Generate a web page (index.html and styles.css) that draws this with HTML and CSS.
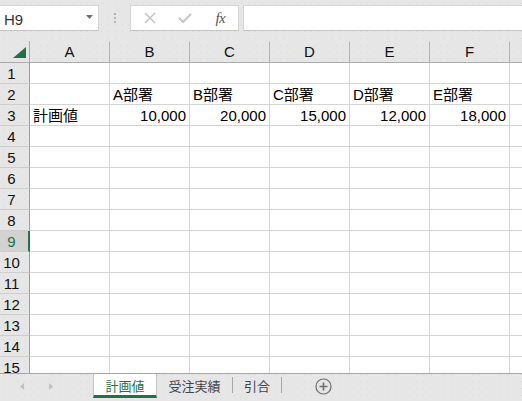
FILE: index.html
```html
<!DOCTYPE html>
<html lang="ja">
<head>
<meta charset="utf-8">
<title>Excel</title>
<link rel="stylesheet" href="styles.css">
</head>
<body>
<div class="app">
  <div class="toolbar">
    <div class="namebox">
      <span class="nb-text">H9</span>
      <svg class="nb-arrow" width="7" height="4" viewBox="0 0 7 4"><path d="M0 0H7L3.5 4Z" fill="#707070"/></svg>
    </div>
    <div class="grip"><i></i><i></i><i></i></div>
    <div class="fbtns">
      <span class="fbtn"><svg width="12" height="12" viewBox="0 0 12 12"><path d="M1 1L11 11M11 1L1 11" stroke="#c4c4c4" stroke-width="1.5" fill="none"/></svg></span>
      <span class="fbtn"><svg width="14" height="10" viewBox="0 0 14 10"><path d="M1 5L5 9L13 1" stroke="#c4c4c4" stroke-width="2" fill="none"/></svg></span>
      <span class="fbtn fx">fx</span>
    </div>
    <div class="formula"></div>
  </div>

  <div class="sheet">
    <div class="corner"><svg width="29" height="21" viewBox="0 0 29 21"><path d="M26 6V17H13Z" fill="#1f7246"/></svg></div>
    <div class="ch">A</div><div class="ch">B</div><div class="ch">C</div><div class="ch">D</div><div class="ch">E</div><div class="ch">F</div><div class="ch"></div>

    <div class="rh">1</div><div class="c"></div><div class="c"></div><div class="c"></div><div class="c"></div><div class="c"></div><div class="c"></div><div class="c"></div>
    <div class="rh">2</div><div class="c"></div><div class="c">A部署</div><div class="c">B部署</div><div class="c">C部署</div><div class="c">D部署</div><div class="c">E部署</div><div class="c"></div>
    <div class="rh">3</div><div class="c">計画値</div><div class="c num">10,000</div><div class="c num">20,000</div><div class="c num">15,000</div><div class="c num">12,000</div><div class="c num">18,000</div><div class="c"></div>
    <div class="rh">4</div><div class="c"></div><div class="c"></div><div class="c"></div><div class="c"></div><div class="c"></div><div class="c"></div><div class="c"></div>
    <div class="rh">5</div><div class="c"></div><div class="c"></div><div class="c"></div><div class="c"></div><div class="c"></div><div class="c"></div><div class="c"></div>
    <div class="rh">6</div><div class="c"></div><div class="c"></div><div class="c"></div><div class="c"></div><div class="c"></div><div class="c"></div><div class="c"></div>
    <div class="rh">7</div><div class="c"></div><div class="c"></div><div class="c"></div><div class="c"></div><div class="c"></div><div class="c"></div><div class="c"></div>
    <div class="rh">8</div><div class="c"></div><div class="c"></div><div class="c"></div><div class="c"></div><div class="c"></div><div class="c"></div><div class="c"></div>
    <div class="rh sel">9</div><div class="c"></div><div class="c"></div><div class="c"></div><div class="c"></div><div class="c"></div><div class="c"></div><div class="c"></div>
    <div class="rh">10</div><div class="c"></div><div class="c"></div><div class="c"></div><div class="c"></div><div class="c"></div><div class="c"></div><div class="c"></div>
    <div class="rh">11</div><div class="c"></div><div class="c"></div><div class="c"></div><div class="c"></div><div class="c"></div><div class="c"></div><div class="c"></div>
    <div class="rh">12</div><div class="c"></div><div class="c"></div><div class="c"></div><div class="c"></div><div class="c"></div><div class="c"></div><div class="c"></div>
    <div class="rh">13</div><div class="c"></div><div class="c"></div><div class="c"></div><div class="c"></div><div class="c"></div><div class="c"></div><div class="c"></div>
    <div class="rh">14</div><div class="c"></div><div class="c"></div><div class="c"></div><div class="c"></div><div class="c"></div><div class="c"></div><div class="c"></div>
    <div class="rh">15</div><div class="c"></div><div class="c"></div><div class="c"></div><div class="c"></div><div class="c"></div><div class="c"></div><div class="c"></div>
  </div>

  <div class="tabbar">
    <div class="tabnav">
      <svg width="4" height="7" viewBox="0 0 4 7"><path d="M4 0V7L0 3.5Z" fill="#c2c2c2"/></svg>
      <svg width="4" height="7" viewBox="0 0 4 7"><path d="M0 0V7L4 3.5Z" fill="#c2c2c2"/></svg>
    </div>
    <div class="tab active">計画値</div>
    <div class="tab t2">受注実績</div>
    <div class="tsep"></div>
    <div class="tab t3">引合</div>
    <div class="tsep"></div>
    <div class="addsheet"><svg width="17" height="17" viewBox="0 0 17 17"><circle cx="8.5" cy="8.5" r="7.5" fill="none" stroke="#6e6e6e" stroke-width="1.2"/><path d="M8.5 4.5V12.5M4.5 8.5H12.5" stroke="#6e6e6e" stroke-width="1.6"/></svg></div>
  </div>
</div>
</body>
</html>
```

FILE: styles.css
```css
html, body {
  margin: 0;
  padding: 0;
}
body {
  width: 522px;
  height: 401px;
  overflow: hidden;
  background-color: #e6e6e6;
  background-image: radial-gradient(circle, #d9d9d9 0.7px, transparent 0.9px);
  background-size: 7px 7px;
  font-family: "Liberation Sans", "Noto Sans CJK JP", sans-serif;
  color: #000;
}
.app {
  width: 522px;
  height: 401px;
  display: flex;
  flex-direction: column;
}

/* formula bar */
.toolbar {
  height: 41px;
  box-sizing: border-box;
  padding-top: 5px;
  display: flex;
  align-items: flex-start;
  flex: none;
}
.namebox {
  width: 99px;
  height: 26px;
  box-sizing: border-box;
  background: #fff;
  border: 1px solid #d6d6d6;
  border-left: none;
  border-bottom-color: #c4c4c4;
  display: flex;
  align-items: center;
  justify-content: space-between;
  padding: 0 5px 0 4px;
}
.nb-text {
  font-size: 15px;
  color: #333;
  line-height: 18px;
  padding-top: 3px;
}
.nb-arrow {
  margin-top: -3px;
}
.grip {
  width: 31px;
  height: 26px;
  display: flex;
  flex-direction: column;
  align-items: center;
  justify-content: center;
  gap: 2px;
}
.grip i {
  display: block;
  width: 2px;
  height: 2px;
  background: #b4b4b4;
}
.fbtns {
  width: 109px;
  height: 26px;
  box-sizing: border-box;
  background: #fff;
  border: 1px solid #d6d6d6;
  border-bottom-color: #c4c4c4;
  display: flex;
  align-items: center;
  padding-left: 1px;
}
.fbtn {
  width: 36px;
  height: 24px;
  display: flex;
  align-items: center;
  justify-content: center;
}
.fx {
  font-family: "Liberation Serif", serif;
  font-style: italic;
  font-size: 15px;
  color: #555;
  letter-spacing: -0.5px;
}
.formula {
  flex: 1;
  margin-left: 4px;
  height: 26px;
  box-sizing: border-box;
  background: #fff;
  border: 1px solid #d6d6d6;
  border-right: none;
  border-bottom-color: #c4c4c4;
}

/* grid */
.sheet {
  flex: none;
  height: 332px;
  overflow: hidden;
  display: grid;
  grid-template-columns: 30px repeat(7, 80px);
  grid-template-rows: 22px repeat(15, 21px);
  background: #fff;
}
.sheet > div {
  box-sizing: border-box;
  white-space: nowrap;
}
.corner {
  border-right: 1px solid #ababab;
  border-bottom: 1px solid #ababab;
  background-color: #e6e6e6;
  background-image: radial-gradient(circle, #d9d9d9 0.7px, transparent 0.9px);
  background-size: 7px 7px;
}
.corner svg {
  display: block;
}
.ch {
  background-color: #e6e6e6;
  background-image: radial-gradient(circle, #d9d9d9 0.7px, transparent 0.9px);
  background-size: 7px 7px;
  border-right: 1px solid #b4b4b4;
  border-bottom: 1px solid #ababab;
  border-top: 1px solid #e6e6e6;
  text-align: center;
  font-size: 15px;
  line-height: 20px;
  color: #111;
}
.rh {
  background-color: #e6e6e6;
  background-image: radial-gradient(circle, #d9d9d9 0.7px, transparent 0.9px);
  background-size: 7px 7px;
  border-right: 1px solid #9e9e9e;
  border-bottom: 1px solid #cdcdcd;
  text-align: center;
  padding: 2px 6px 0 0;
  font-size: 15px;
  line-height: 18px;
  color: #111;
}
.rh.sel {
  background: #d2d2d2;
  color: #217346;
  border-right: 2px solid #217346;
  padding-right: 5px;
}
.c {
  border-right: 1px solid #d4d4d4;
  border-bottom: 1px solid #d4d4d4;
  padding: 2px 3px 0;
  font-size: 15px;
  line-height: 18px;
}
.c.num {
  text-align: right;
  padding-right: 3px;
}

/* sheet tabs */
.tabbar {
  flex: none;
  height: 28px;
  box-sizing: border-box;
  border-top: 1px solid #a6a6a6;
  display: flex;
  align-items: flex-start;
  font-family: "Noto Sans CJK JP", sans-serif;
  font-size: 13px;
}
.tabnav {
  width: 93px;
  height: 25px;
  box-sizing: border-box;
  display: flex;
  align-items: center;
  padding-left: 20px;
  gap: 25px;
}
.tabnav svg {
  display: block;
}
.tab {
  height: 21px;
  box-sizing: border-box;
  padding-top: 3px;
  line-height: 18px;
  text-align: center;
  color: #444;
}
.tab.active {
  width: 64px;
  height: 24px;
  background: #fff;
  border-left: 1px solid #c4c4c4;
  border-right: 1px solid #c4c4c4;
  border-bottom: 3px solid #217346;
  color: #217346;
}
.tab.t2 {
  width: 75px;
}
.tab.t3 {
  width: 48px;
}
.tsep {
  width: 1px;
  height: 16px;
  margin-top: 3px;
  background: #a8a8a8;
}
.addsheet {
  margin-left: 33px;
  margin-top: 4px;
  width: 17px;
  height: 17px;
}
.addsheet svg {
  display: block;
}
```
